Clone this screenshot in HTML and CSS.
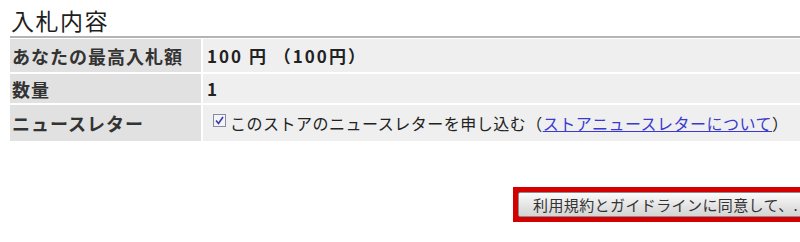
FILE: index.html
```html
<!DOCTYPE html>
<html lang="ja">
<head>
<meta charset="utf-8">
<link rel="stylesheet" href="styles.css">
</head>
<body>
<div class="page">
  <h2 class="title">入札内容</h2>
  <div class="table">
    <div class="label">あなたの最高入札額</div>
    <div class="value strong amount">100 円 （100円）</div>
    <div class="label">数量</div>
    <div class="value strong">1</div>
    <div class="label">ニュースレター</div>
    <div class="value news">
      <span class="check"><svg width="13" height="13" viewBox="0 0 13 13"><rect x="0.5" y="0.5" width="12" height="12" fill="#f4f4f8" stroke="#8a8aa0"/><path d="M3 6.5 L5.5 9.5 L10 3" fill="none" stroke="#3a3aa8" stroke-width="1.6"/></svg></span>
      <span>このストアのニュースレターを申し込む（<a class="link" href="#">ストアニュースレターについて</a>）</span>
    </div>
  </div>
  <div class="actions">
    <div class="frame">
      <button class="btn" type="button">利用規約とガイドラインに同意して、.</button>
    </div>
  </div>
</div>
</body>
</html>
```

FILE: styles.css
```css
html, body {
  margin: 0;
  padding: 0;
  background: #fff;
  overflow: hidden;
}
body {
  width: 800px;
  height: 242px;
  font-family: "Noto Sans CJK JP", "Noto Sans", sans-serif;
  color: #2a2a2a;
}
.page {
  padding-top: 6px;
}
.title {
  margin: 0 0 0 11px;
  font-size: 23px;
  font-weight: normal;
  line-height: 28px;
  color: #1e1e1e;
  letter-spacing: 1.5px;
}
.table {
  margin-top: 2px;
  margin-left: 10px;
  border-top: 2px solid #b4b4b4;
  padding-top: 1px;
  display: grid;
  grid-template-columns: 191px 1fr;
  grid-template-rows: 33px 29px 36px;
  column-gap: 2px;
  row-gap: 2px;
}
.label {
  background: #e1e1e1;
  font-weight: bold;
  font-size: 18px;
  letter-spacing: 1px;
  padding-left: 2px;
  display: flex;
  align-items: center;
  color: #333;
}
.value {
  background: #efefef;
  display: flex;
  align-items: center;
  padding-left: 4px;
  font-size: 16px;
  color: #222;
  white-space: nowrap;
}
.strong {
  font-weight: bold;
  font-size: 17px;
}
.amount {
  letter-spacing: 2px;
}
.news {
  padding-left: 10px;
  gap: 4px;
  font-size: 16px;
  letter-spacing: 0.5px;
}
.check {
  display: flex;
  margin-top: -6px;
}
.link {
  color: #3a3ad0;
  text-decoration: underline;
}
.actions {
  margin-top: 46px;
  padding-left: 513px;
  display: flex;
}
.frame {
  background: #d40000;
  padding: 5px;
  flex-shrink: 0;
}
.btn {
  display: block;
  height: 25px;
  width: 400px;
  padding: 0 0 0 14px;
  text-align: left;
  border: 1px solid #8c8c8c;
  border-radius: 2px;
  background: linear-gradient(#fbfbfb, #e4e4e4 55%, #d4d4d4);
  font-family: "Noto Sans CJK JP", "Noto Sans", sans-serif;
  font-size: 15px;
  letter-spacing: 0.4px;
  line-height: 22px;
  color: #333;
  white-space: nowrap;
}
```
